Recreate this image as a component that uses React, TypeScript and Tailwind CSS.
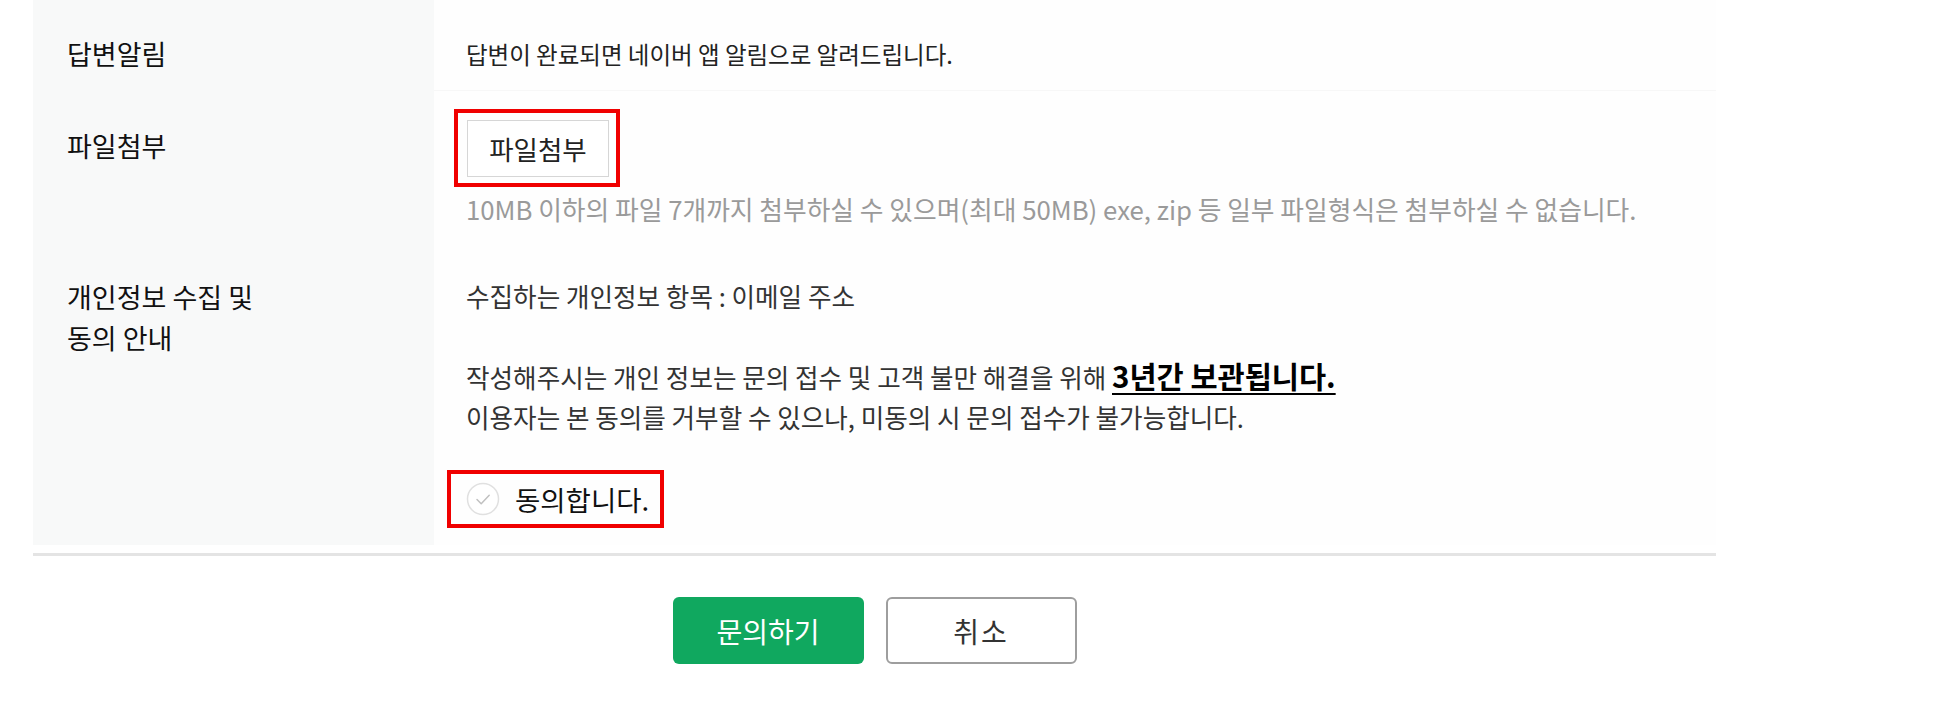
import React from 'react'

const CheckCircle: React.FC = () => (
    <svg width="34" height="34" viewBox="0 0 34 34" fill="none">
        <circle cx="17" cy="17" r="15.5" stroke="#e0e0e0" strokeWidth="1.5" fill="#fff" />
        <path d="M11 17.5l4.2 4.2 8-8.4" stroke="#c0c0c0" strokeWidth="1.5" strokeLinecap="round" strokeLinejoin="round" />
    </svg>
)

const App: React.FC = () => {
    return (
        <div className="min-h-screen bg-white font-['Noto_Sans_CJK_KR',sans-serif] text-[#222]">
            <div className="ml-[33px] w-[1683px]">
                {/* Form table */}
                <div className="border-b-[3px] border-[#e4e4e4] pb-[8px]">
                    {/* 답변알림 */}
                    <div className="flex h-[90px]">
                        <div className="w-[401px] shrink-0 bg-[#f8f9f9] pl-[34px] pt-[34px] text-[27px] leading-[40px] text-[#111]">
                            답변알림
                        </div>
                        <div className="flex-1 bg-[#fefefe] pl-[32px] pt-[34px] text-[23.5px] leading-[40px] text-[#222]">
                            답변이 완료되면 네이버 앱 알림으로 알려드립니다.
                        </div>
                    </div>

                    {/* 파일첨부 */}
                    <div className="flex h-[150px]">
                        <div className="w-[401px] shrink-0 bg-[#f8f9f9] pl-[34px] pt-[36px] text-[27px] leading-[40px] text-[#111]">
                            파일첨부
                        </div>
                        <div className="flex-1 bg-[#fefefe] pl-[20px] pt-[18px] border-t border-[#f7f7f7]">
                            <div className="inline-block border-[4px] border-[#f00000] pl-[9px] pr-[7px] pt-[7px] pb-[6px]">
                                <button className="flex h-[57px] w-[142px] items-center justify-center border border-[#d6d6d6] bg-white text-[26.5px] text-[#222]">
                                    파일첨부
                                </button>
                            </div>
                            <p className="mt-[2px] pl-[12px] text-[25.75px] leading-[40px] text-[#9a9a9a]">
                                10MB 이하의 파일 7개까지 첨부하실 수 있으며(최대 50MB) exe, zip 등 일부 파일형식은 첨부하실 수 없습니다.
                            </p>
                        </div>
                    </div>

                    {/* 개인정보 수집 및 동의 안내 */}
                    <div className="flex h-[305px]">
                        <div className="w-[401px] shrink-0 bg-[#f8f9f9] pl-[34px] pt-[36px] text-[27px] leading-[41px] text-[#111]">
                            개인정보 수집 및
                            <br />
                            동의 안내
                        </div>
                        <div className="flex-1 bg-[#fefefe] pl-[32px] pt-[36px] text-[25.6px] leading-[40px] text-[#333]">
                            <p>수집하는 개인정보 항목 : 이메일 주소</p>
                            <p className="mt-[41px]">
                                작성해주시는 개인 정보는 문의 접수 및 고객 불만 해결을 위해{' '}
                                <strong className="text-[29.5px] leading-none font-bold text-black underline underline-offset-[5px] decoration-[2px]">
                                    3년간 보관됩니다.
                                </strong>
                                <br />
                                이용자는 본 동의를 거부할 수 있으나, 미동의 시 문의 접수가 불가능합니다.
                            </p>
                            <div className="mt-[33px] -ml-[19px] inline-flex h-[58px] items-center gap-[15px] border-[4px] border-[#f00000] pl-[15px] pr-[11px]">
                                <CheckCircle />
                                <span className="text-[27.5px] text-[#111]">동의합니다.</span>
                            </div>
                        </div>
                    </div>
                </div>

                {/* Buttons */}
                <div className="mt-[41px] flex justify-center gap-[22px]">
                    <button className="h-[67px] w-[191px] rounded-[6px] bg-[#10a85f] text-[28px] text-white">
                        문의하기
                    </button>
                    <button className="h-[67px] w-[191px] rounded-[6px] border-2 border-[#9e9e9e] bg-white text-[28px] tracking-[2px] text-[#333]">
                        취소
                    </button>
                </div>
            </div>
        </div>
    )
}

export default App
